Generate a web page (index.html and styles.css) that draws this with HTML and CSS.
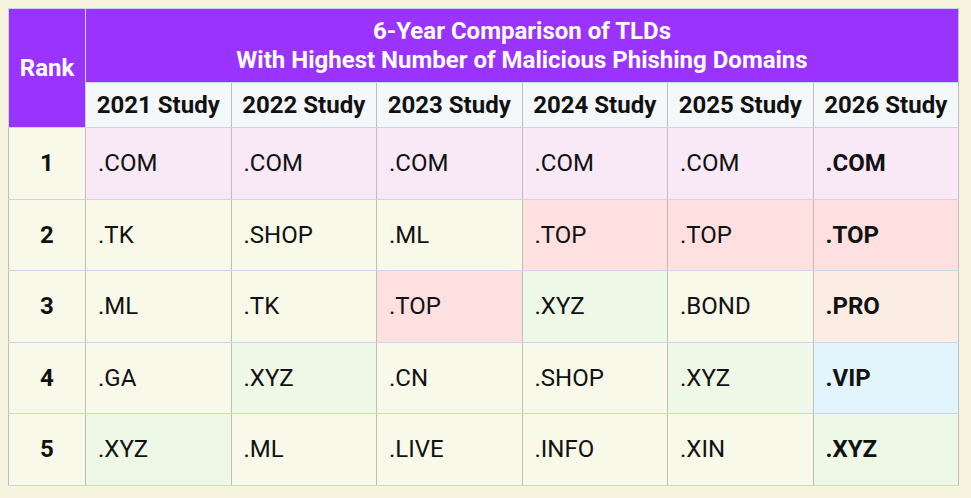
FILE: index.html
```html
<!DOCTYPE html>
<html lang="en">
<head>
<meta charset="utf-8">
<title>6-Year Comparison of TLDs</title>
<link rel="stylesheet" href="styles.css">
</head>
<body>
<table class="tld-table">
  <thead>
    <tr class="title-row">
      <th class="rank-head" rowspan="2">Rank</th>
      <th class="title" colspan="6">6-Year Comparison of TLDs<br>With Highest Number of Malicious Phishing Domains</th>
    </tr>
    <tr class="year-row">
      <th>2021 Study</th>
      <th>2022 Study</th>
      <th>2023 Study</th>
      <th>2024 Study</th>
      <th>2025 Study</th>
      <th>2026 Study</th>
    </tr>
  </thead>
  <tbody>
    <tr>
      <td class="rank">1</td>
      <td class="c-com">.COM</td>
      <td class="c-com">.COM</td>
      <td class="c-com">.COM</td>
      <td class="c-com">.COM</td>
      <td class="c-com">.COM</td>
      <td class="c-com latest">.COM</td>
    </tr>
    <tr>
      <td class="rank">2</td>
      <td class="c-plain">.TK</td>
      <td class="c-plain">.SHOP</td>
      <td class="c-plain">.ML</td>
      <td class="c-top">.TOP</td>
      <td class="c-top">.TOP</td>
      <td class="c-top latest">.TOP</td>
    </tr>
    <tr>
      <td class="rank">3</td>
      <td class="c-plain">.ML</td>
      <td class="c-plain">.TK</td>
      <td class="c-top">.TOP</td>
      <td class="c-xyz">.XYZ</td>
      <td class="c-plain">.BOND</td>
      <td class="c-pro latest">.PRO</td>
    </tr>
    <tr>
      <td class="rank">4</td>
      <td class="c-plain">.GA</td>
      <td class="c-xyz">.XYZ</td>
      <td class="c-plain">.CN</td>
      <td class="c-plain">.SHOP</td>
      <td class="c-xyz">.XYZ</td>
      <td class="c-vip latest">.VIP</td>
    </tr>
    <tr>
      <td class="rank">5</td>
      <td class="c-xyz">.XYZ</td>
      <td class="c-plain">.ML</td>
      <td class="c-plain">.LIVE</td>
      <td class="c-plain">.INFO</td>
      <td class="c-plain">.XIN</td>
      <td class="c-xyz latest">.XYZ</td>
    </tr>
  </tbody>
</table>
</body>
</html>
```

FILE: styles.css
```css
html, body {
  margin: 0;
  padding: 0;
}
body {
  background: #f6f4de;
  padding: 8px;
  font-family: Roboto, "Liberation Sans", Arial, sans-serif;
  color: #111;
}
.tld-table {
  width: 951px;
  border-collapse: collapse;
  table-layout: fixed;
  border: 1px solid #c9d2ee;
}
.tld-table th,
.tld-table td {
  border-left: 1px solid #bdbdbd;
  border-right: 1px solid #bdbdbd;
  border-top: 1px solid #c8d6ee;
  border-bottom: 1px solid #c8d6ee;
  padding: 0;
  font-size: 24px;
}
.tld-table .rank-head {
  width: 76px;
  background: #9b33ff;
  color: #fff;
  font-weight: 700;
  text-align: center;
  border-color: #c9d2ee;
}
.tld-table .title {
  height: 73px;
  background: #9b33ff;
  color: #fff;
  font-weight: 700;
  line-height: 29px;
  text-align: center;
  padding-top: 0;
}
.tld-table .year-row th {
  height: 44px;
  background: #f5f8fb;
  font-weight: 700;
  color: #111;
  text-align: center;
}
.tld-table tbody td {
  height: 70.5px;
  padding-left: 12px;
  text-align: left;
}
.tld-table tbody td.rank {
  background: #f8f9e8;
  font-weight: 700;
  text-align: center;
  padding-left: 0;
}
.c-com { background: #f9e8f6; }
.c-plain { background: #f8f9e8; }
.c-top { background: #ffe0e1; }
.c-xyz { background: #edf8e7; }
.c-pro { background: #fcede4; }
.c-vip { background: #e2f5fd; }
.tld-table .latest { font-weight: 700; }
```
